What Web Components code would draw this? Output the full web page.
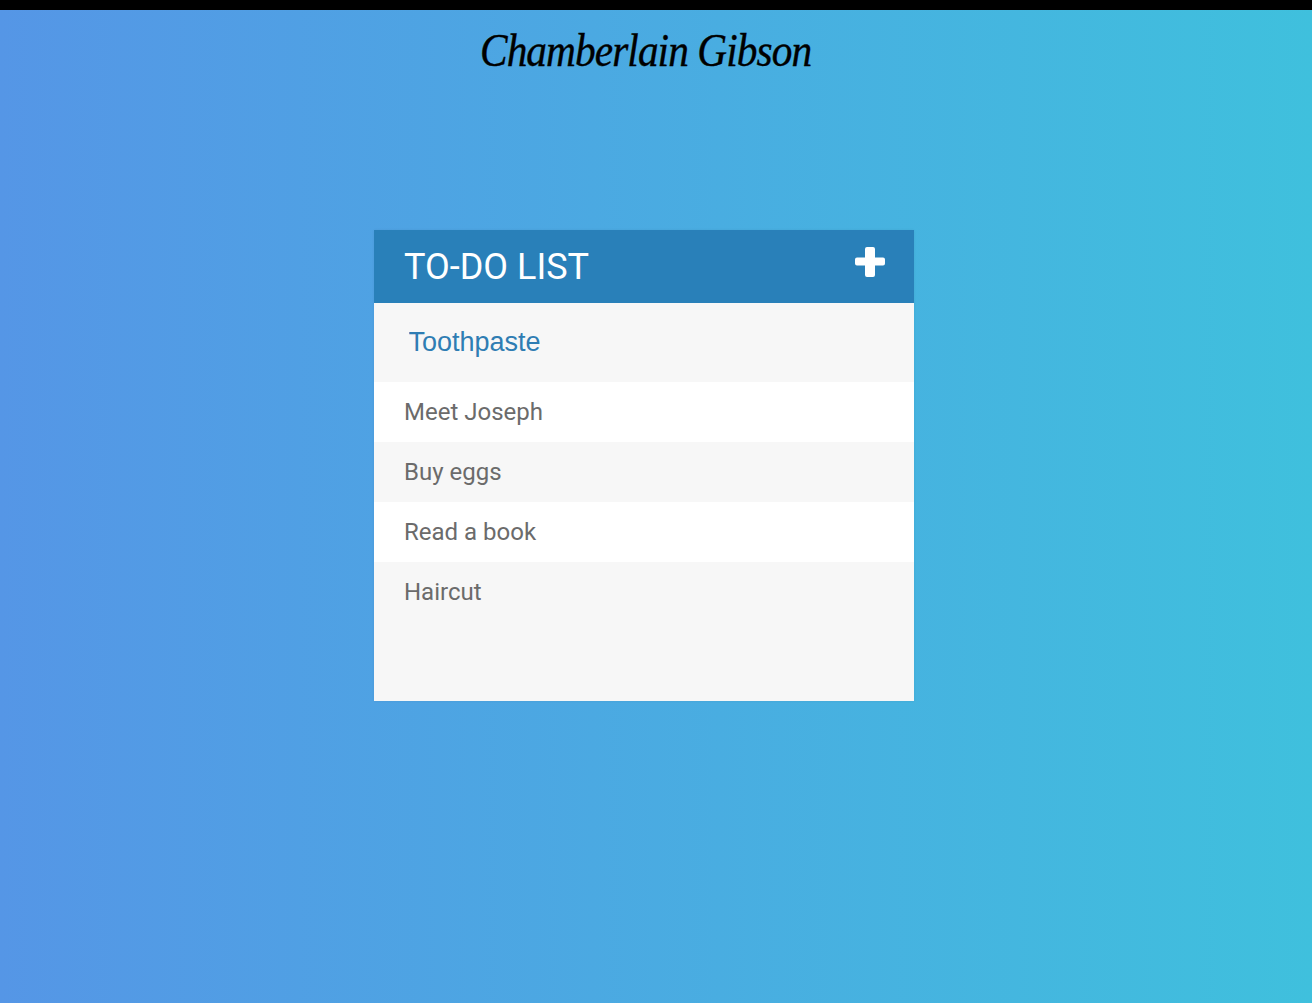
<!DOCTYPE html>
<html>
<head>
<meta charset="utf-8">
<title>To-Do List</title>
<style>
  html, body { margin: 0; height: 100%; }
  body { background: linear-gradient(to right, #5596e6, #3fc0dd); }
</style>
</head>
<body>
<app-page>
  <site-title slot="title">Chamberlain Gibson</site-title>
  <todo-card>
    <todo-item>Meet Joseph</todo-item>
    <todo-item>Buy eggs</todo-item>
    <todo-item>Read a book</todo-item>
    <todo-item>Haircut</todo-item>
  </todo-card>
</app-page>

<script>
class AppPage extends HTMLElement {
  constructor() {
    super();
    this.attachShadow({ mode: 'open' });
    this.shadowRoot.innerHTML = `
      <style>
        :host { display: block; height: 1003px; border-top: 10px solid #000; box-sizing: border-box; padding-right: 20px; }
        .main { display: flex; justify-content: center; padding-right: 4px; margin-top: 143px; }
      </style>
      <slot name="title"></slot>
      <div class="main"><slot></slot></div>
    `;
  }
}

class SiteTitle extends HTMLElement {
  constructor() {
    super();
    this.attachShadow({ mode: 'open' });
    this.shadowRoot.innerHTML = `
      <style>
        :host {
          display: block;
          height: 77px;
          text-align: center;
          font: italic 400 46px/82px "Monotype Corsiva", "URW Chancery L", "Liberation Serif", serif;
          letter-spacing: -1px;
          color: #000;
        }
        span { display: inline-block; transform: scaleX(0.897); -webkit-text-stroke: 0.4px #000; }
      </style>
      <span><slot></slot></span>
    `;
  }
}

class TodoCard extends HTMLElement {
  constructor() {
    super();
    this.attachShadow({ mode: 'open' });
    this.shadowRoot.innerHTML = `
      <style>
        :host {
          display: block;
          width: 540px;
          height: 471px;
          background: #f7f7f7;
          box-shadow: 0 0 3px rgba(0,0,0,0.06);
        }
        header {
          height: 73px;
          box-sizing: border-box;
          padding: 0 29px 0 30px;
          background: #2980b9;
          color: #fff;
          display: flex;
          align-items: center;
          justify-content: space-between;
          font: 400 36px/1 Roboto, sans-serif;
        }
        svg { display: block; width: 30px; height: 30px; margin-top: -9px; }
        input {
          display: block;
          width: 100%;
          height: 79px;
          box-sizing: border-box;
          border: 0;
          outline: 0;
          background: #f7f7f7;
          padding: 0 0 0 34.5px;
          font: 400 27px "Liberation Sans", Arial, sans-serif;
          color: #2f7db3;
        }
      </style>
      <header>
        <span>TO-DO LIST</span>
        <svg viewBox="0 0 30 30" aria-hidden="true">
          <path fill="#fff" d="M12 0h6a2 2 0 0 1 2 2v8.500h8a2 2 0 0 1 2 2v4a2 2 0 0 1-2 2h-8V28a2 2 0 0 1-2 2h-6a2 2 0 0 1-2-2v-9.500H2a2 2 0 0 1-2-2v-4a2 2 0 0 1 2-2h8V2a2 2 0 0 1 2-2z"/>
        </svg>
      </header>
      <input type="text" value="Toothpaste">
      <slot></slot>
    `;
  }
}

class TodoItem extends HTMLElement {
  constructor() {
    super();
    this.attachShadow({ mode: 'open' });
    this.shadowRoot.innerHTML = `
      <style>
        :host {
          display: block;
          height: 60px;
          box-sizing: border-box;
          padding: 0 30px;
          font: 400 24px/60px Roboto, sans-serif;
          color: #6b6b6b;
          background: #f7f7f7;
        }
        :host(:nth-child(odd)) { background: #fff; }
      </style>
      <slot></slot>
    `;
  }
}

customElements.define('app-page', AppPage);
customElements.define('site-title', SiteTitle);
customElements.define('todo-card', TodoCard);
customElements.define('todo-item', TodoItem);
</script>
</body>
</html>
